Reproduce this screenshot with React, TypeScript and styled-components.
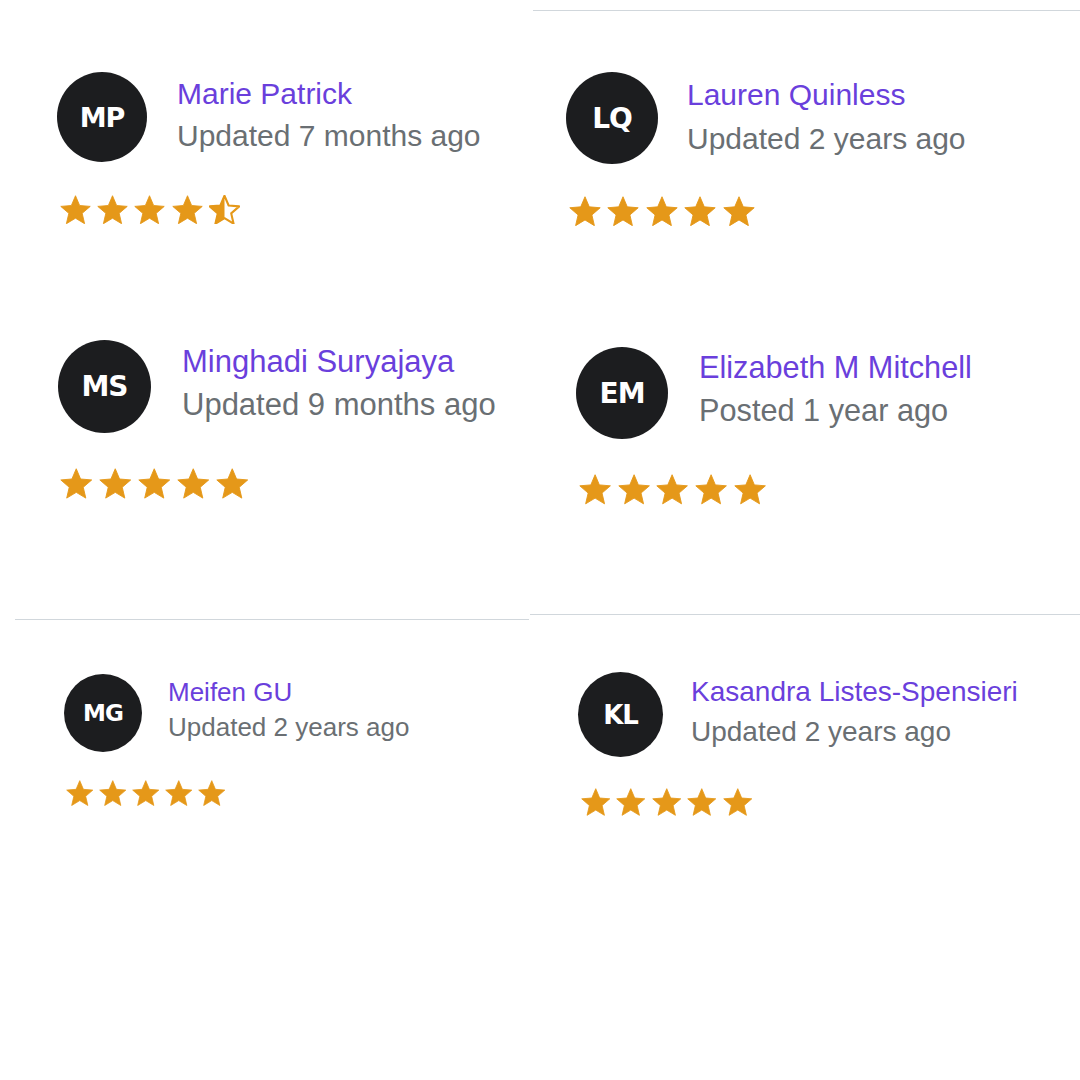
import React from 'react';
import styled, { createGlobalStyle } from 'styled-components';

interface Review {
    initials: string,
    name: string,
    meta: string,
    rating: number,
    avatar: number,
    font: number,
    line: number,
    gap: number,
    nudge: number,
    star: number,
    starTop: number,
    starLeft: number,
    height?: number,
    padTop: number,
    padLeft: number
}

const leftColumn: Review[] = [
    { initials: 'MP', name: 'Marie Patrick', meta: 'Updated 7 months ago', rating: 4.5, avatar: 90, font: 30, line: 42, gap: 30, nudge: 1, star: 31, starTop: 33, starLeft: 3, height: 300, padTop: 72, padLeft: 57 },
    { initials: 'MS', name: 'Minghadi Suryajaya', meta: 'Updated 9 months ago', rating: 5, avatar: 93, font: 31, line: 43, gap: 31, nudge: 0, star: 32.5, starTop: 35, starLeft: 2, height: 319, padTop: 40, padLeft: 58 },
]

const leftBottom: Review = { initials: 'MG', name: 'Meifen GU', meta: 'Updated 2 years ago', rating: 5, avatar: 78, font: 26, line: 35, gap: 26, nudge: 1, star: 27.5, starTop: 28, starLeft: 2, padTop: 54, padLeft: 64 }

const rightColumn: Review[] = [
    { initials: 'LQ', name: 'Lauren Quinless', meta: 'Updated 2 years ago', rating: 5, avatar: 92, font: 30, line: 44, gap: 29, nudge: 1, star: 32, starTop: 32, starLeft: 3, height: 300, padTop: 61, padLeft: 36 },
    { initials: 'EM', name: 'Elizabeth M Mitchell', meta: 'Posted 1 year ago', rating: 5, avatar: 92, font: 30.7, line: 43, gap: 31, nudge: -1, star: 32.2, starTop: 35, starLeft: 3, height: 303, padTop: 36, padLeft: 46 },
]

const rightBottom: Review = { initials: 'KL', name: 'Kasandra Listes-Spensieri', meta: 'Updated 2 years ago', rating: 5, avatar: 85, font: 28, line: 40, gap: 28, nudge: 0, star: 29.5, starTop: 31, starLeft: 3, padTop: 57, padLeft: 48 }

const STAR = 'M12 17.27L18.18 21l-1.64-7.03L22 9.24l-7.19-.61L12 2 9.19 8.63 2 9.24l5.46 4.73L5.82 21z'

function Star({ size, half }: { size: number, half?: boolean }) {
    const id = React.useId()
    return (
        <svg width={size} height={size * 0.95} viewBox="1.5 1.5 21 20">
            {half ? (
                <>
                    <defs>
                        <clipPath id={id}>
                            <rect x="0" y="0" width="12" height="24" />
                        </clipPath>
                    </defs>
                    <path d={STAR} fill="none" stroke="#e59819" strokeWidth="1.4" strokeLinejoin="round" />
                    <path d={STAR} fill="#e59819" stroke="#e59819" strokeWidth="0.6" strokeLinejoin="round" clipPath={`url(#${id})`} />
                </>
            ) : (
                <path d={STAR} fill="#e59819" stroke="#e59819" strokeWidth="0.6" strokeLinejoin="round" />
            )}
        </svg>
    )
}

function ReviewCard({ review, grow }: { review: Review, grow?: boolean }) {
    const stars = [1, 2, 3, 4, 5].map(n => (
        <Star key={n} size={review.star} half={review.rating < n && review.rating > n - 1} />
    ))

    return (
        <Tile $h={review.height} $pt={review.padTop} $pl={review.padLeft} $grow={grow}>
            <Header>
                <Avatar $size={review.avatar}>{review.initials}</Avatar>
                <Info $gap={review.gap} $font={review.font} $line={review.line} $nudge={review.nudge}>
                    <Name>{review.name}</Name>
                    <Meta>{review.meta}</Meta>
                </Info>
            </Header>
            <Stars $top={review.starTop} $left={review.starLeft} $gap={review.star * 0.2}>
                {stars}
            </Stars>
        </Tile>
    )
}

export default function App() {
    return (
        <>
            <GlobalStyle />
            <Page>
                <Column>
                    {leftColumn.map(r => <ReviewCard key={r.initials} review={r} />)}
                    <Rule $left={15} $right={1} />
                    <ReviewCard review={leftBottom} grow />
                </Column>
                <Column>
                    <Rule $top={10} $left={3} />
                    {rightColumn.map(r => <ReviewCard key={r.initials} review={r} />)}
                    <Rule $left={0} />
                    <ReviewCard review={rightBottom} grow />
                </Column>
            </Page>
        </>
    )
}

const GlobalStyle = createGlobalStyle`
    html, body {
        margin: 0;
        padding: 0;
        background: #ffffff;
    }
    body {
        font-family: "Liberation Sans", Arial, sans-serif;
    }
`

const Page = styled.div`
    width: 1080px;
    height: 1080px;
    display: grid;
    grid-template-columns: 530px 550px;
    overflow: hidden;
    background: #ffffff;
`

const Column = styled.div`
    display: flex;
    flex-direction: column;
    min-width: 0;
`

const Rule = styled.div<{ $top?: number, $left: number, $right?: number }>`
    flex-shrink: 0;
    height: 1px;
    background: #d1d7dc;
    margin: ${p => p.$top ?? 0}px ${p => p.$right ?? 0}px 0 ${p => p.$left}px;
`

const Tile = styled.div<{ $h?: number, $pt: number, $pl: number, $grow?: boolean }>`
    box-sizing: border-box;
    flex: ${p => p.$grow ? '1' : '0 0 auto'};
    height: ${p => p.$h ? `${p.$h}px` : 'auto'};
    padding: ${p => p.$pt}px 0 0 ${p => p.$pl}px;
`

const Header = styled.div`
    display: flex;
    align-items: flex-start;
`

const Avatar = styled.div<{ $size: number }>`
    flex-shrink: 0;
    width: ${p => p.$size}px;
    height: ${p => p.$size}px;
    border-radius: 50%;
    background: #1c1d1f;
    color: #ffffff;
    display: flex;
    align-items: center;
    justify-content: center;
    font-family: "DejaVu Sans", "Liberation Sans", sans-serif;
    font-weight: 700;
    font-size: ${p => Math.round(p.$size * 0.3)}px;
    letter-spacing: -1px;
`

const Info = styled.div<{ $gap: number, $font: number, $line: number, $nudge: number }>`
    display: flex;
    flex-direction: column;
    margin: ${p => p.$nudge}px 0 0 ${p => p.$gap}px;
    font-size: ${p => p.$font}px;
    line-height: ${p => p.$line}px;
    white-space: nowrap;
`

const Name = styled.div`
    color: #6a3fdc;
`

const Meta = styled.div`
    color: #6a6f73;
`

const Stars = styled.div<{ $top: number, $left: number, $gap: number }>`
    display: flex;
    gap: ${p => p.$gap}px;
    margin: ${p => p.$top}px 0 0 ${p => p.$left}px;

    svg {
        display: block;
    }
`
